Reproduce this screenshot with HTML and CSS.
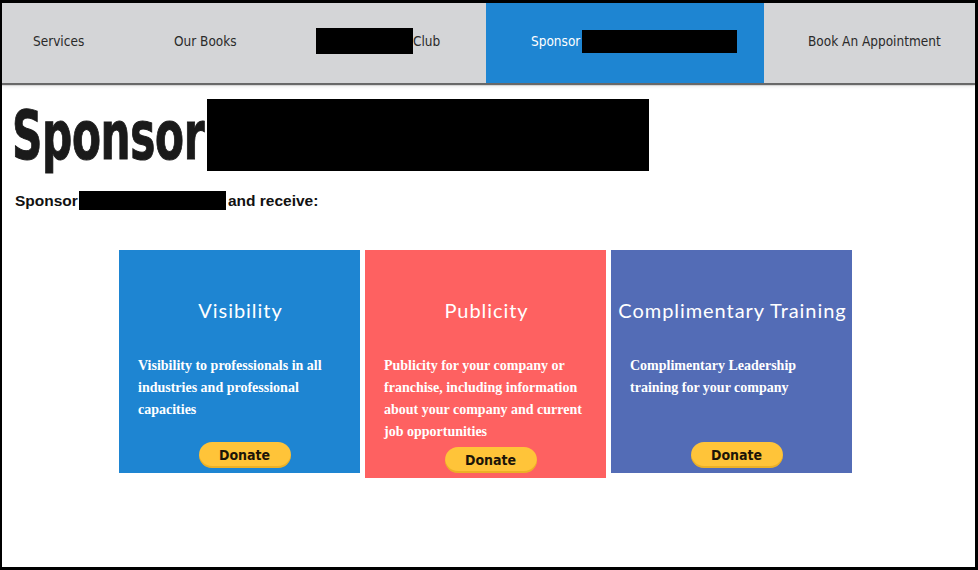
FILE: index.html
```html
<!DOCTYPE html>
<html>
<head>
<meta charset="utf-8">
<link rel="stylesheet" href="styles.css">
</head>
<body>
<div class="frame">
  <nav class="nav">
    <a class="nav-item item-services">Services</a>
    <a class="nav-item item-books">Our Books</a>
    <a class="nav-item item-club"><span class="redact redact-club"></span>Club</a>
    <a class="nav-item item-sponsor active">Sponsor <span class="redact redact-nav"></span></a>
    <a class="nav-item item-book">Book An Appointment</a>
  </nav>
  <main class="content">
    <h1 class="title"><span class="title-word"><span class="title-inner">Sponsor</span></span><span class="redact redact-title"></span></h1>
    <p class="lead">Sponsor <span class="redact redact-lead"></span>and receive:</p>
    <div class="cards">
      <section class="card card-blue">
        <h2 class="card-title">Visibility</h2>
        <p class="card-text">Visibility to professionals in all industries and professional capacities</p>
        <button class="donate">Donate</button>
      </section>
      <section class="card card-red">
        <h2 class="card-title">Publicity</h2>
        <p class="card-text">Publicity for your company or franchise, including information about your company and current job opportunities</p>
        <button class="donate">Donate</button>
      </section>
      <section class="card card-indigo">
        <h2 class="card-title">Complimentary Training</h2>
        <p class="card-text">Complimentary Leadership training for your company</p>
        <button class="donate">Donate</button>
      </section>
    </div>
  </main>
</div>
</body>
</html>
```
FILE: styles.css
```css
html, body {
  margin: 0;
  padding: 0;
  height: 100%;
}
body {
  background: #fff;
}
.frame {
  box-sizing: border-box;
  height: 570px;
  border: 2px solid #000;
  border-top-width: 3px;
  border-bottom-width: 3px;
  border-right-width: 3px;
  overflow: hidden;
  display: flex;
  flex-direction: column;
}
.nav {
  display: flex;
  height: 80px;
  background: #d4d5d7;
  box-shadow: 0 2px 1px rgba(0,0,0,0.55), 0 3px 4px rgba(0,0,0,0.12);
  font-family: "DejaVu Sans Condensed", "DejaVu Sans", sans-serif;
  font-size: 13.5px;
  color: #2a2a2a;
  position: relative;
  z-index: 1;
}
.nav-item {
  display: flex;
  align-items: center;
  box-sizing: border-box;
  white-space: nowrap;
  padding-bottom: 4px;
}
.item-services { flex: 0 0 127px; padding-left: 31px; }
.item-books { flex: 0 0 142px; padding-left: 45px; }
.item-club { flex: 0 0 215px; padding-left: 45px; }
.item-sponsor { flex: 0 0 278px; padding-left: 45px; }
.item-book { flex: 1 1 auto; padding-left: 44px; }
.active {
  background: #1e85d2;
  color: #fff;
}
.redact {
  display: inline-block;
  background: #000;
}
.redact-club { width: 97px; height: 26px; }
.redact-nav { width: 155px; height: 23px; margin-left: 2px; }
.content {
  padding: 16px 11px 0 11px;
}
.title {
  margin: 0;
  display: flex;
  align-items: center;
  height: 72px;
  font-family: "DejaVu Sans Condensed", "DejaVu Sans", sans-serif;
  font-weight: 700;
  font-size: 67px;
  color: #1a1a1a;
}
.title-word {
  display: inline-block;
  width: 192px;
  margin-left: -1px;
  white-space: nowrap;
}
.title-inner {
  display: inline-block;
  transform-origin: left center;
  transform: scale(0.7, 1.0);
  letter-spacing: -0.5px;
  -webkit-text-stroke: 1px #1a1a1a;
  position: relative;
  top: 1px;
}
.redact-title { width: 442px; height: 72px; margin-left: 3px; }
.lead {
  margin: 20px 0 0 2px;
  font-family: "Liberation Sans", Arial, sans-serif;
  font-weight: 700;
  font-size: 15.5px;
  color: #111;
  display: flex;
  align-items: center;
}
.redact-lead { width: 147px; height: 19px; margin: 0 2px 0 1px; }
.cards {
  display: flex;
  justify-content: flex-start;
  align-items: flex-start;
  gap: 5px;
  margin-top: 40px;
  padding-left: 106px;
}
.card {
  width: 241px;
  min-height: 223px;
  box-sizing: border-box;
  display: flex;
  flex-direction: column;
  padding: 48px 17px 5px 19px;
  color: #fff;
}
.card-blue { background: #1e85d2; }
.card-red { background: #fe6161; }
.card-indigo { background: #536cb6; }
.card-title {
  margin: 0 -19px;
  text-align: center;
  font-family: "Lato", "Open Sans", sans-serif;
  font-weight: 400;
  font-size: 20px;
  letter-spacing: 0.95px;
  line-height: 24px;
}
.card-text {
  margin: 33px 0 0 0;
  font-family: "Liberation Serif", "DejaVu Serif", serif;
  font-weight: 700;
  font-size: 14px;
  line-height: 22px;
}
.donate {
  margin: auto auto 0 auto;
  position: relative;
  left: 4px;
  width: 92px;
  height: 26px;
  border: none;
  border-radius: 13px;
  background: #ffc439;
  box-shadow: inset 0 -2px 0 rgba(200,140,0,0.35);
  font-family: "DejaVu Sans Condensed", "DejaVu Sans", sans-serif;
  font-weight: 700;
  font-size: 14px;
  color: #1c1408;
  padding: 0;
  cursor: pointer;
}
.card-red .card-text + .donate { margin-top: 4px; }
```
